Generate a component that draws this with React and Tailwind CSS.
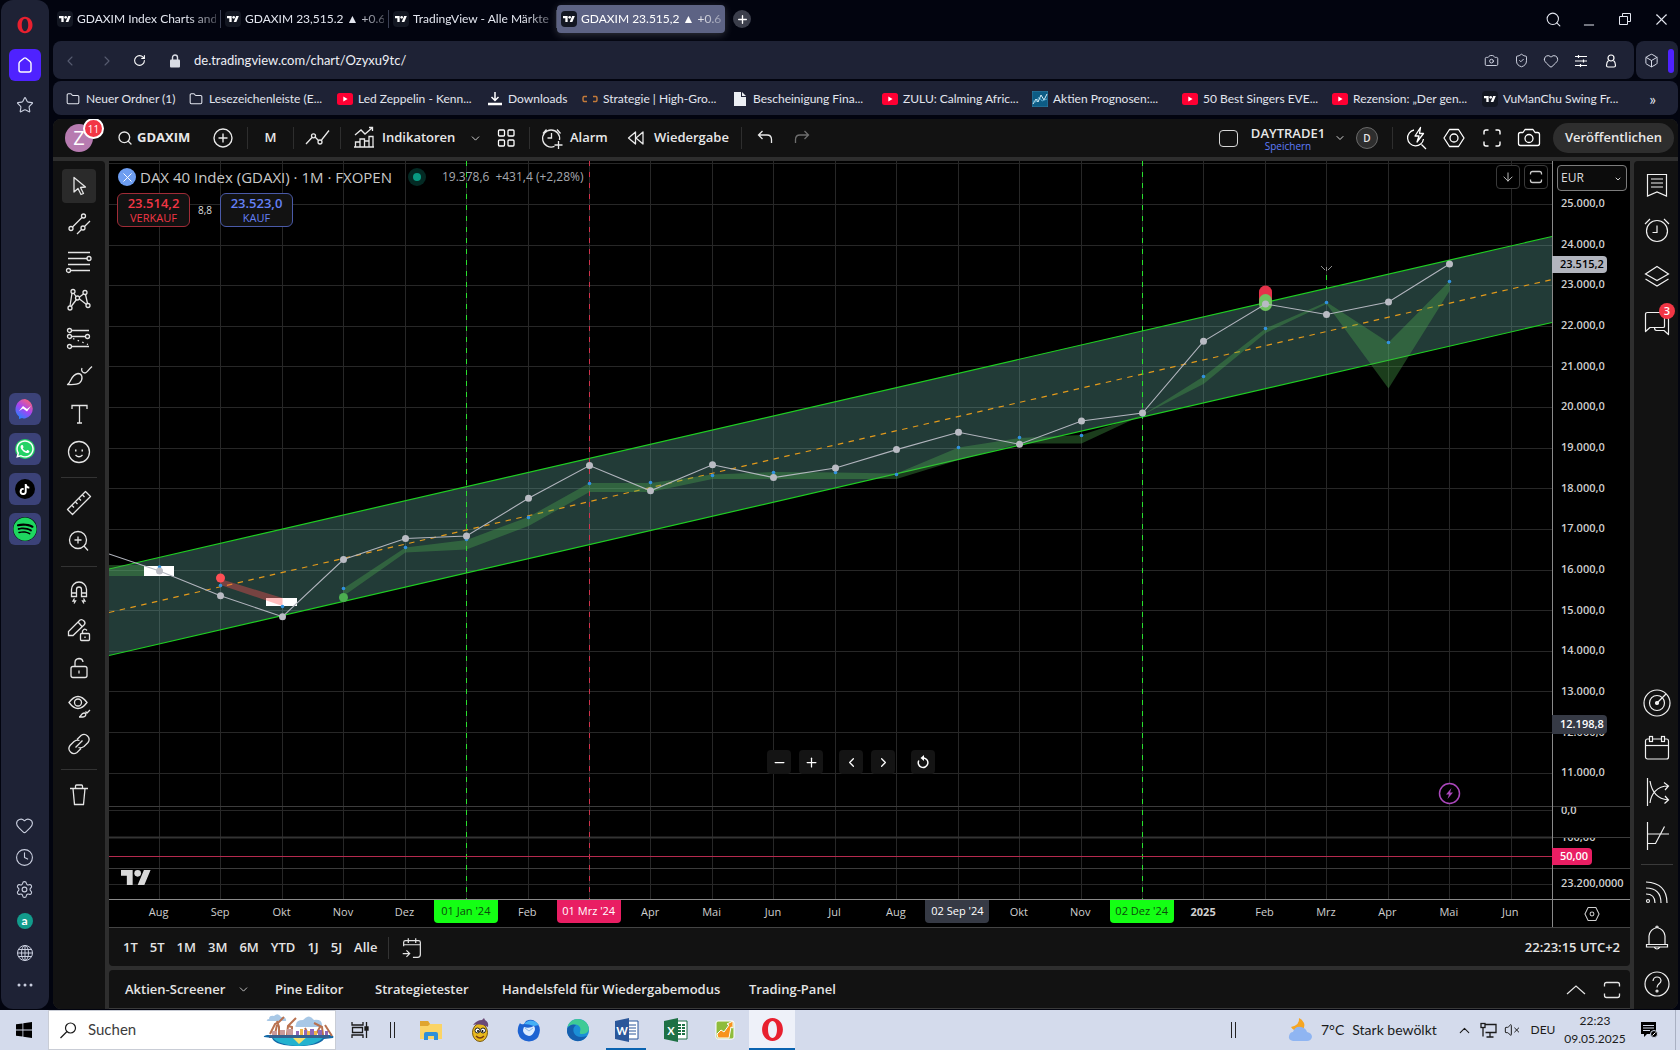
import React, { useState } from 'react';
import {
  Search, Minus, Plus, X, Copy, ChevronLeft, ChevronRight, ChevronDown, ChevronUp, RotateCw, Camera,
  ShieldCheck, Heart, Box, Folder, Undo, Redo, Layers, Settings, Clock, Globe, Star, ArrowDown, VolumeX,
} from 'lucide-react';
import { FaWhatsapp, FaTiktok, FaSpotify } from 'react-icons/fa';

/* ---------- data ---------- */

const TABS = ['GDAXIM Index Charts and', 'GDAXIM 23,515.2 ▲ +0.61', 'TradingView - Alle Märkte'];

const BOOKMARKS = [
  { icon: 'folder', label: 'Neuer Ordner (1)', width: 'w-[123px]' },
  { icon: 'folder', label: 'Lesezeichenleiste (E...', width: 'w-[149px]' },
  { icon: 'yt', label: 'Led Zeppelin - Kenn...', width: 'w-[150px]' },
  { icon: 'download', label: 'Downloads', width: 'w-[95px]' },
  { icon: 'brackets', label: 'Strategie | High-Gro...', width: 'w-[150px]' },
  { icon: 'file', label: 'Bescheinigung Fina...', width: 'w-[150px]' },
  { icon: 'yt', label: 'ZULU: Calming Afric...', width: 'w-[150px]' },
  { icon: 'chart', label: 'Aktien Prognosen:...', width: 'w-[150px]' },
  { icon: 'yt', label: '50 Best Singers EVE...', width: 'w-[150px]' },
  { icon: 'yt', label: 'Rezension: „Der gen...', width: 'w-[150px]' },
  { icon: 'tv', label: 'VuManChu Swing Fr...', width: 'w-[150px]' },
];

const MONTHS = [
  { label: 'Aug', x: 159.5 }, { label: 'Sep', x: 220.5 }, { label: 'Okt', x: 282.5 }, { label: 'Nov', x: 343.5 },
  { label: 'Dez', x: 405.5 }, { label: "01 Jan '24", x: 466.5, mark: 'green' }, { label: 'Feb', x: 528.5 },
  { label: "01 Mrz '24", x: 589.5, mark: 'red' }, { label: 'Apr', x: 650.5 }, { label: 'Mai', x: 712.5 },
  { label: 'Jun', x: 773.5 }, { label: 'Jul', x: 835.5 }, { label: 'Aug', x: 896.5 },
  { label: "02 Sep '24", x: 958.5, mark: 'gray' }, { label: 'Okt', x: 1019.5 }, { label: 'Nov', x: 1081.5 },
  { label: "02 Dez '24", x: 1142.5, mark: 'green' }, { label: '2025', x: 1203.5, bold: true }, { label: 'Feb', x: 1265.5 },
  { label: 'Mrz', x: 1326.5 }, { label: 'Apr', x: 1388.5 }, { label: 'Mai', x: 1449.5 }, { label: 'Jun', x: 1511.5 },
];

const MARKS = {
  green: 'bg-[#14ff14] text-[#0c4a0c]',
  red: 'bg-[#e91e63] text-white',
  gray: 'bg-[#363a45] text-white',
};

const PRICES = [25, 24, 23, 22, 21, 20, 19, 18, 17, 16, 15, 14, 13, 12, 11];
const GRID_Y = [163.5, 204.5, 245.5, 285.5, 326.5, 366.5, 407.5, 448.5, 488.5, 529.5, 570.5, 610.5, 651.5, 691.5, 732.5, 773.5, 810.5, 884.5];
const CLOSES = [571, 595.7, 616.7, 559.5, 538.5, 536, 498.3, 465.5, 490.8, 464.8, 477.6, 468, 449.6, 432.3, 444.3, 421, 413, 341.3, 304, 314.5, 302, 264];
const DOTS = [567, 585.5, 606.5, 588.5, 547.5, 539.5, 517.5, 483.5, 482.5, 475.5, 472.5, 472.5, 474.5, 447.5, 437.5, 435.5, 415, 376.5, 328.5, 302.5, 342.5, 281.5];
const BAND_TOP = [588.5, 547.5, 540, 517, 483, 483, 474.5, 472, 472.5, 473.5, 447.5, 438, 435, 415, 376.5, 328.5, 302, 342.5, 281];
const BAND_LOW = [596, 552.5, 549.5, 526, 492, 492, 479, 479, 479, 479, 460, 443.5, 443.5, 415, 384, 333, 304, 388.5, 291];

const RANGES = ['1T', '5T', '1M', '3M', '6M', 'YTD', '1J', '5J', 'Alle'];

/* ---------- small drawings ---------- */

const Svg = ({ size = 28, box = 28, sw = 1.2, className = '', children }) => (
  <svg width={size} height={size} viewBox={`0 0 ${box} ${box}`} fill="none" stroke="currentColor" strokeWidth={sw} className={`shrink-0 ${className}`} aria-hidden="true">
    {children}
  </svg>
);

const TvMark = ({ className }) => (
  <svg viewBox="0 4 36 18" fill="currentColor" className={className} aria-hidden="true">
    <path d="M14 22H7V11H0V4h14v18zM28 22h-8l7.5-18h8L28 22z" />
    <circle cx="20" cy="8" r="4" />
  </svg>
);

const TvFavicon = () => (
  <span className="flex h-4 w-4 shrink-0 items-center justify-center rounded-sm bg-[#131722] text-white">
    <TvMark className="w-3" />
  </span>
);

const OperaLogo = ({ className }) => (
  <svg viewBox="0 0 24 24" className={className} aria-hidden="true">
    <path fill="#e8202f" fillRule="evenodd" d="M12 1c6 0 10 5 10 11s-4 11-10 11S2 18 2 12 6 1 12 1zm0 2.800c-2.700 0-4.300 3.700-4.300 8.200s1.600 8.200 4.300 8.200 4.300-3.700 4.300-8.200S14.700 3.800 12 3.800z" />
  </svg>
);

function BookmarkIcon({ kind }) {
  switch (kind) {
    case 'folder':
      return <Folder size={14} strokeWidth={1.8} />;
    case 'yt':
      return (
        <svg width="16" height="12" viewBox="0 0 16 12" aria-hidden="true">
          <rect width="16" height="12" rx="2.500" fill="#ff0033" />
          <path d="M6.300 3.500v5L10.600 6z" fill="#fff" />
        </svg>
      );
    case 'download':
      return (
        <svg width="14" height="14" viewBox="0 0 14 14" stroke="#fff" fill="none" aria-hidden="true">
          <path d="M7 0v8M3.500 5 7 8.500 10.500 5" strokeWidth="1.500" />
          <path d="M0 12h14" strokeWidth="2.500" />
        </svg>
      );
    case 'brackets':
      return (
        <svg width="16" height="8" viewBox="0 0 16 8" stroke="#c27a3a" fill="none" strokeWidth="1.500" aria-hidden="true">
          <path d="M5 1.500H2Q1 1.500 1 4t1 2.500h3M11 1.500h3q1 0 1 2.500t-1 2.500h-3" />
        </svg>
      );
    case 'file':
      return (
        <svg width="12" height="14" viewBox="0 0 12 14" fill="#eceff4" aria-hidden="true">
          <path d="M0 0h7v5h5v9H0z" /><path d="M8 0l4 4H8z" />
        </svg>
      );
    case 'chart':
      return (
        <svg width="16" height="16" viewBox="0 0 16 16" aria-hidden="true">
          <rect width="16" height="16" fill="#0d5c85" stroke="#4d92b4" strokeWidth=".6" />
          <path d="M1 13l3-5 2 3 3-7 3 5 3-6" stroke="#d7eef8" fill="none" />
          <path d="M1 10l3 1 3-5 3 4 5-2" stroke="#6db9dc" fill="none" strokeWidth=".8" />
        </svg>
      );
    default:
      return <TvFavicon />;
  }
}

const IconButton = ({ label, className = '', children }) => (
  <button type="button" aria-label={label} className={`flex shrink-0 items-center justify-center ${className}`}>
    {children}
  </button>
);

/* ---------- browser ---------- */

function BrowserSidebar() {
  const app = 'flex h-8 w-8 items-center justify-center rounded-md bg-[#3b4278]';
  return (
    <aside className="ml-px flex w-12 shrink-0 flex-col items-center rounded-xl bg-[#1e2235] pr-px pb-2 text-[#c9cede]">
      <OperaLogo className="mt-4 h-[18px] w-[18px]" />
      <IconButton label="Startseite" className="mt-[15px] h-8 w-8 rounded-md bg-[#4f22ff] text-white">
        <Svg size={20} box={20} sw={1.4}><path d="M4 8.500q0-1 1-2L9 3.200q1-.7 2 0l4 3.300q1 1 1 2V15q0 2-2 2H6q-2 0-2-2z" strokeLinejoin="round" /></Svg>
      </IconButton>
      <IconButton label="Favoriten" className="mt-2 h-8 w-8"><Star size={18} strokeWidth={1.5} /></IconButton>
      <div className="mt-[272px] flex flex-col gap-2">
        <a href="#messenger" aria-label="Messenger" className={app}>
          <svg width="20" height="20" viewBox="0 0 20 20" aria-hidden="true">
            <defs>
              <linearGradient id="msg" x1="0.200" y1="1" x2="0.800" y2="0">
                <stop offset="0" stopColor="#1f86ff" />
                <stop offset=".5" stopColor="#a444f2" />
                <stop offset="1" stopColor="#ff6570" />
              </linearGradient>
            </defs>
            <path d="M10 0a10 10 0 0 1 0 19.500q-1.500 0-3-.5l-3 1v-2.500A10 10 0 0 1 10 0z" fill="url(#msg)" />
            <path d="M4 12l4-5 4 3 4-3-4 5.500-4-3z" fill="#fff" />
          </svg>
        </a>
        <a href="#whatsapp" aria-label="WhatsApp" className={app}>
          <span className="flex h-5 w-5 items-center justify-center rounded-full bg-[#25d366] text-white"><FaWhatsapp size={20} /></span>
        </a>
        <a href="#tiktok" aria-label="TikTok" className={app}>
          <span className="flex h-5 w-5 items-center justify-center rounded-full bg-black text-white"><FaTiktok size={11} /></span>
        </a>
        <a href="#spotify" aria-label="Spotify" className={app}>
          <span className="rounded-full bg-black"><FaSpotify size={24} className="text-[#1ed760]" /></span>
        </a>
      </div>
      <div className="mt-auto flex flex-col items-center">
        <IconButton label="Pinnwände" className="h-8 w-8"><Heart size={19} strokeWidth={1.4} /></IconButton>
        <IconButton label="Verlauf" className="h-8 w-8"><Clock size={19} strokeWidth={1.4} /></IconButton>
        <IconButton label="Einstellungen" className="h-8 w-8"><Settings size={19} strokeWidth={1.4} /></IconButton>
        <IconButton label="Aria" className="h-8 w-8">
          <span className="flex h-4 w-4 items-center justify-center rounded-full bg-[#129c8c] text-xs leading-3 font-bold text-white">a</span>
        </IconButton>
        <IconButton label="Sprache" className="h-8 w-8">
          <Svg size={18} box={18} sw={1}><circle cx="9" cy="9" r="7.500" /><ellipse cx="9" cy="9" rx="3.500" ry="7.500" /><path d="M9 1.500v15M1.500 9h15M2.500 5.500h13M2.500 12.500h13" /></Svg>
        </IconButton>
        <IconButton label="Mehr" className="h-8 w-8">
          <svg width="16" height="4" fill="currentColor"><circle cx="2" cy="2" r="1.500" /><circle cx="8" cy="2" r="1.500" /><circle cx="14" cy="2" r="1.500" /></svg>
        </IconButton>
      </div>
    </aside>
  );
}

function TabStrip() {
  const fade = 'flex-1 overflow-hidden text-left whitespace-nowrap [mask-image:linear-gradient(to_right,#000_80%,#0005)]';
  return (
    <div className="flex h-[41px] items-start pt-[5px] text-xs text-[#e3e6ef]">
      <div role="tablist" className="flex">
        {TABS.map((t) => (
          <button key={t} type="button" role="tab" aria-selected="false" className="flex h-7 w-[168px] items-center gap-1 pl-1">
            <TvFavicon />
            <span className={fade}>{t}</span>
            <span className="h-[18px] w-px bg-[#3a3f52]" />
          </button>
        ))}
        <button type="button" role="tab" aria-selected="true" className="flex h-7 w-[168px] items-center gap-1 rounded-sm bg-[#5d6384] px-1 text-white shadow-[0_2px_8px_#ffffff30]">
          <TvFavicon />
          <span className={fade}>GDAXIM 23.515,2 ▲ +0.61</span>
        </button>
      </div>
      <IconButton label="Neuer Tab" className="mt-[5px] ml-2 h-[18px] w-[18px] rounded-full bg-[#3b3e4b] text-white"><Plus size={13} strokeWidth={2.5} /></IconButton>
      <div className="ml-auto flex pr-px">
        <IconButton label="Tabs suchen" className="h-7 w-9"><Search size={17} strokeWidth={1.5} /></IconButton>
        <IconButton label="Minimieren" className="h-7 w-9 pt-3"><Minus size={16} strokeWidth={1.5} /></IconButton>
        <IconButton label="Wiederherstellen" className="h-7 w-9">
          <Svg size={14} box={14} sw={1}><path d="M1.500 4.500h8v8h-8zM4.500 4.500v-3h8v8h-3" /></Svg>
        </IconButton>
        <IconButton label="Schließen" className="h-7 w-9"><X size={19} strokeWidth={1.4} /></IconButton>
      </div>
    </div>
  );
}

function AddressBar() {
  return (
    <div className="flex h-[38px] gap-[2px] pr-[2px] text-[#d5d9e6]">
      <div className="flex flex-1 items-center rounded-lg bg-[#1e2235] pt-px">
        <IconButton label="Zurück" className="h-9 w-[34px] text-[#575c70]"><ChevronLeft size={16} strokeWidth={1.6} /></IconButton>
        <IconButton label="Vorwärts" className="h-9 w-10 text-[#575c70]"><ChevronRight size={16} strokeWidth={1.6} /></IconButton>
        <IconButton label="Neu laden" className="h-9 w-6 text-white"><RotateCw size={13} strokeWidth={2} /></IconButton>
        <svg width="10" height="14" viewBox="0 0 10 14" className="ml-[19px]" aria-hidden="true">
          <path d="M2.500 6V3.500a2.500 2.500 0 0 1 5 0V6" fill="none" stroke="#d9dce4" strokeWidth="1.400" />
          <rect y="5.500" width="10" height="8" rx="1" fill="#d9dce4" />
        </svg>
        <input aria-label="Adresse" defaultValue="de.tradingview.com/chart/Ozyxu9tc/" className="ml-[14px] min-w-0 flex-1 bg-transparent text-[13px] text-[#eef0f6] outline-none" />
        <div className="flex pr-2">
          <IconButton label="Schnappschuss" className="h-9 w-[30px]"><Camera size={15} strokeWidth={1.5} /></IconButton>
          <IconButton label="Werbeblocker" className="h-9 w-[30px]"><ShieldCheck size={15} strokeWidth={1.5} /></IconButton>
          <IconButton label="Merken" className="h-9 w-[30px]"><Heart size={16} strokeWidth={1.5} /></IconButton>
          <IconButton label="Einfache Einrichtung" className="h-9 w-[30px] text-white">
            <Svg size={14} box={14}><path d="M1 2.500h12M1 7h12M1 11.500h12M4.500 1v3M9.500 5.500v3M6.500 10v3" /></Svg>
          </IconButton>
          <IconButton label="Profil" className="h-9 w-[30px] text-white">
            <Svg size={14} box={14}><circle cx="7" cy="4" r="3" /><path d="M4.500 6.500C2.500 8 2.500 9.500 2.500 11.500q0 1.500 1.500 1.500h6q1.500 0 1.500-1.500c0-2 0-3.500-2-5" /></Svg>
          </IconButton>
        </div>
      </div>
      <div className="flex w-[42px] items-center justify-end gap-[5px] rounded-lg bg-[#1e2235] pt-px pr-1">
        <IconButton label="Erweiterungen" className="h-9 w-6"><Box size={15} strokeWidth={1.6} /></IconButton>
        <span className="h-6 w-[6px] rounded-sm bg-[#4f22ff]" />
      </div>
    </div>
  );
}

function BookmarkBar() {
  return (
    <nav className="mt-[2px] mr-[2px] flex h-[34px] items-center rounded-lg bg-[#1e2235] pt-px pl-3 text-xs text-[#e3e6ef]">
      {BOOKMARKS.map((b) => (
        <a key={b.label} href="#lesezeichen" className={`flex shrink-0 items-center gap-[5px] whitespace-nowrap ${b.width}`}>
          <span className="flex w-4 shrink-0 justify-center"><BookmarkIcon kind={b.icon} /></span>
          {b.label}
        </a>
      ))}
      <button type="button" aria-label="Weitere Lesezeichen" className="ml-auto pr-[22px] text-base leading-4">»</button>
    </nav>
  );
}

/* ---------- chart application ---------- */

const Divider = () => <span className="h-[22px] w-px shrink-0 bg-[#2e2e2e]" />;

function TopToolbar() {
  return (
    <header className="flex h-[38px] shrink-0 items-center bg-[#121212] text-[13px] font-semibold text-[#e8e8e8]">
      <button type="button" aria-label="Konto, 11 Mitteilungen" className="relative ml-3 flex h-7 w-7 shrink-0 items-center justify-center rounded-full bg-[#b77bb0] text-xl font-medium text-white">
        Z
        <span className="absolute -top-[6px] left-[18px] flex h-[21px] w-[21px] items-center justify-center rounded-full border-2 border-white bg-[#f23645] text-[10px]">11</span>
      </button>
      <button type="button" className="ml-6 flex h-full w-[84px] items-center gap-1 font-bold"><Search size={16} strokeWidth={2} className="shrink-0" />GDAXIM</button>
      <IconButton label="Symbol vergleichen" className="mr-[2px] h-full w-[44px]">
        <Svg sw={1.4}><circle cx="14" cy="14" r="9" /><path d="M14 9.500v9M9.500 14h9" /></Svg>
      </IconButton>
      <Divider />
      <button type="button" className="h-full w-[45px]">M</button>
      <Divider />
      <IconButton label="Diagrammtyp" className="h-full w-[46px]">
        <Svg sw={1.3}><path d="M3 20 9 13.500M12 13l3.500 3.500M18.500 16l7.500-9.500" /><circle cx="10.500" cy="11.800" r="2" /><circle cx="17" cy="18" r="2" /></Svg>
      </IconButton>
      <Divider />
      <button type="button" className="flex h-full w-[122px] items-center gap-1 pl-[9px]">
        <Svg sw={1.3}><path d="M5 11l6-5 4 4 7-6M19 3.500h3.500V7M5.500 23v-5H10v5zM10 23v-8h4.500v8zM14.500 23v-6H19v6zM19 23V12.500h4V23zM4 23h20" /></Svg>
        Indikatoren
      </button>
      <IconButton label="Favorisierte Indikatoren" className="h-full w-6"><ChevronDown size={13} strokeWidth={1.6} /></IconButton>
      <IconButton label="Vorlagen" className="mr-1 h-full w-[38px] text-white">
        <Svg sw={1.3}><rect x="6.500" y="6" width="6" height="6" rx="1" /><rect x="16" y="6" width="6" height="6" rx="1" /><rect x="6.500" y="16" width="6" height="6" rx="1" /><rect x="16" y="16" width="6" height="6" rx="1" /></Svg>
      </IconButton>
      <Divider />
      <button type="button" className="flex h-full w-[92px] items-center gap-1 pl-2">
        <Svg sw={1.3}><path d="M21.500 16a8.500 8.500 0 1 0-5 6.300M13.500 9v5H9.500M5 9.500 8.500 5.500M19 5.500 22.500 9.500M20.500 17v8M16.500 21h8" /></Svg>
        Alarm
      </button>
      <button type="button" className="flex h-full w-[119px] items-center gap-1">
        <Svg sw={1.3}><path d="M13.500 8v12L6.500 14zM21 8v12L14 14z" strokeLinejoin="round" /></Svg>
        Wiedergabe
      </button>
      <Divider />
      <IconButton label="Rückgängig" className="h-full w-[46px]">
        <Svg sw={1.3}><path d="M11.500 7 7.500 11l4 4M7.500 11H16q4.500 0 4.500 4.500V19" /></Svg>
      </IconButton>
      <IconButton label="Wiederholen" className="h-full w-7 text-[#6e6e6e]">
        <Svg sw={1.3}><path d="M16.500 7l4 4-4 4M20.500 11H12q-4.500 0-4.500 4.500V19" /></Svg>
      </IconButton>

      <div className="ml-auto flex h-full items-center">
        <IconButton label="Layout" className="h-full w-10"><span className="h-[17px] w-[19px] rounded-sm border border-[#d8d8d8]" /></IconButton>
        <button type="button" className="flex w-[80px] flex-col items-center leading-4">
          DAYTRADE1
          <span className="text-[10px] leading-[10px] font-medium text-[#5f7dfb]">Speichern</span>
        </button>
        <IconButton label="Layout verwalten" className="h-full w-6"><ChevronDown size={12} strokeWidth={1.8} /></IconButton>
        <IconButton label="D" className="mr-[14px] ml-1 h-[22px] w-[22px] rounded-full border border-[#6a6a6a] bg-[#2e2e2e] text-[10px]">D</IconButton>
        <Divider />
        <IconButton label="Schnellsuche" className="ml-1 h-full w-[38px] text-white">
          <Svg sw={1.3}><path d="M12 6a8 8 0 1 0 9.500 9M19.500 20.500l4.500 4.500M18.500 3.500 13 12h4l-2 6 6.500-8.500h-4z" strokeLinejoin="round" /></Svg>
        </IconButton>
        <IconButton label="Einstellungen" className="h-full w-[38px] text-white">
          <Svg sw={1.3}><path d="M9.500 5.500h9l5.500 8.500-5.500 8.500h-9L4 14z" strokeLinejoin="round" /><circle cx="14" cy="14" r="4" /></Svg>
        </IconButton>
        <IconButton label="Vollbild" className="h-full w-[37px] text-white">
          <Svg sw={1.4}><path d="M6 10.500V8q0-2 2-2h2.500M17.500 6H20q2 0 2 2v2.500M22 17.500V20q0 2-2 2h-2.500M10.500 22H8q-2 0-2-2v-2.500" /></Svg>
        </IconButton>
        <IconButton label="Schnappschuss" className="h-full w-[38px] text-white">
          <Svg sw={1.3}><path d="M10 5.500h8l2 3h2.500q2 0 2 2v9q0 2-2 2h-17q-2 0-2-2v-9q0-2 2-2H8z" strokeLinejoin="round" /><circle cx="14" cy="14.500" r="4" /></Svg>
        </IconButton>
        <button type="button" className="mr-1 ml-[5px] h-[30px] w-[121px] rounded-full bg-[#2e2e2e]">Veröffentlichen</button>
      </div>
    </header>
  );
}

const TOOLS = [
  { name: 'Cursor', active: true, art: <path d="M9 5.500v14.500l4-3.500 3 6 2.500-1-3-6 5-.5z" strokeLinejoin="round" /> },
  { name: 'Trendlinien', art: <><path d="M7.500 17 17 7.500M12 24l4.500-4.500M19.500 16.500 25 11" /><circle cx="6" cy="18.500" r="2" /><circle cx="18.500" cy="6" r="2" /><circle cx="18" cy="18" r="2" /></> },
  { name: 'Fibonacci', art: <><path d="M3 4.500h22M3 10.500h19.500M3 16.500h22M5.500 22.500H25" /><circle cx="24" cy="10.500" r="2" /><circle cx="3.500" cy="22.500" r="2" /></> },
  { name: 'Muster', art: <><path d="M7 7 5 20M9 7.500l2 3M6.500 20l5-6.500M14.500 11l4-3M14.500 13l7 5.500M20.500 8.500l2 9" /><circle cx="8" cy="5.500" r="2" /><circle cx="20" cy="6.500" r="2" /><circle cx="5" cy="22" r="2" /><circle cx="23" cy="19.500" r="2" /><circle cx="12.500" cy="12" r="2" /></> },
  { name: 'Prognose', art: <><path d="M6.500 6.500H24M6.500 12.500h14M6.500 22.500H24" /><path d="M8 14.500l15 6" strokeDasharray="1.500 3.500" /><circle cx="4.500" cy="6.500" r="2" /><circle cx="4.500" cy="12.500" r="2" /><circle cx="22.500" cy="12.500" r="2" /><circle cx="4.500" cy="22.500" r="2" /></> },
  { name: 'Pinsel', art: <path d="M2.500 22.500c3.500-1 3-10 10.500-11 4.500 0 5.500 6 1.500 9.500C12 23 8 22.500 2.500 22.500zM17 6c-1 2 0 5 3 5 2 0 2-2 7-6.500" strokeLinejoin="round" /> },
  { name: 'Text', art: <path d="M7 9V5.500h15V9M14.500 5.500v17.500M12 23h5" /> },
  { name: 'Emojis', art: <><circle cx="14" cy="14" r="10.500" /><path d="M10.500 17q3.500 3.500 7 0" /><path d="M10 12.500h1.500M16.500 12.500H18" strokeWidth="2" /></>, end: true },
  { name: 'Messen', art: <><path d="M2.500 20.500 20.500 2.500l5 5L7.500 25.500z" strokeLinejoin="round" /><path d="M7 16.500l2 2M10.500 13l2 2M14 9.500l2 2M17.500 6l2 2" /></> },
  { name: 'Zoom', art: <><circle cx="13" cy="13" r="8.500" /><path d="M13 9.500v7M9.500 13h7M19 19l4 4.500" /></>, end: true },
  { name: 'Magnet', art: <><path d="M6.500 18.500v-7a7.500 7.500 0 0 1 15 0v7h-5v-7a2.500 2.500 0 0 0-5 0v7zM6.500 15h5M16.500 15h5" /><path d="M9.500 20.500 8 23h2.500L9 25.500M18.500 20.500 20 23h-2.500l1.500 2.500" /></> },
  { name: 'Zeichenmodus', art: <><path d="M3.500 19.500v-4L15 4q2-1 4 1t0 4L8 19.500zM13 6l4 4.500" /><rect x="15.500" y="17.500" width="9" height="7" rx="1" /><path d="M17.500 17.500V15q2-3.500 4.500-.5M20 20.500v1.500" /></> },
  { name: 'Sperren', art: <><rect x="6" y="12.500" width="16" height="11" rx="2" /><path d="M10 12.500V8.500q0-3.500 4-4 3.500 0 4 3.500M14 16.500v3" /></> },
  { name: 'Ausblenden', art: <><path d="M4 10.500q9-12 18 0-9 12-18 0z" /><circle cx="13" cy="10.500" r="3.500" /><path d="M14 25c2 0 2-4 5-4s2 4-1 4zM20.500 19.500l1.500 1.500 3-3" /></> },
  { name: 'Verknüpfen', art: <path d="M12 9.500l4-4q3.500-2.500 6.500.5t.5 6.500l-4 4q-3 2-5.500 1M16 18.500l-4 4q-3.500 2.500-6.500-.5t-.500-6.500l4-4q3-2 5.500-1M10.500 17.500l7-7" />, end: true },
  { name: 'Löschen', art: <path d="M5 7.500h18M8 7.500l1.500 16h9L20 7.500M10.500 7.500V5q0-1 1-1h5q1 0 1 1v2.500" /> },
];

function DrawingToolbar() {
  return (
    <div className="flex w-[52px] shrink-0 flex-col items-center rounded-tr bg-[#121212] pt-[6px] text-[#e4e4e4]">
      {TOOLS.map((t) => (
        <React.Fragment key={t.name}>
          <IconButton label={t.name} className="h-[38px] w-full">
            <span className={t.active ? 'flex h-[34px] w-[34px] items-center justify-center rounded bg-[#2a2a2a]' : ''}>
              <Svg size={28} sw={1.3}>{t.art}</Svg>
            </span>
          </IconButton>
          {t.end && <span className="my-[6px] h-px w-9 shrink-0 bg-[#333]" />}
        </React.Fragment>
      ))}
    </div>
  );
}

function Chart() {
  const priceLine = ['109,554'].concat(CLOSES.map((y, i) => `${MONTHS[i].x},${y}`)).join(' ');
  const band = BAND_TOP.map((y, i) => `${MONTHS[i + 3].x},${y}`)
    .concat(BAND_LOW.map((y, i) => `${MONTHS[i + 3].x},${y}`).reverse())
    .join(' ');
  return (
    <svg viewBox="109 161 1443 738" preserveAspectRatio="none" className="absolute inset-0 h-full w-full" role="img" aria-label="DAX 40 Index, Monatschart">
      <g stroke="#272727">
        {MONTHS.map((m) => <path key={m.x} d={`M${m.x} 161V899`} />)}
        {GRID_Y.map((y) => <path key={y} d={`M109 ${y}H1552`} />)}
        <path d="M109 806.5H1552M109 868.5H1552" stroke="#3c3c3c" />
        <path d="M109 837.5H1552" stroke="#333" strokeWidth="2" />
      </g>
      <path d="M109 569 1552 236.500V322.500L109 655.500z" fill="#6bb8ab" fillOpacity=".32" />
      <path d="M109 569 1552 236.500M109 655.500 1552 322.500" stroke="#1fce22" strokeWidth="1.200" />
      <path d="M109 612.500 1552 279.500" stroke="#e39a1b" strokeWidth="1.200" strokeDasharray="5.500 5.500" />
      <g strokeDasharray="5 6">
        <path d="M466.500 161V899M1142.500 161V899M1326.500 275V289" stroke="#28e32e" />
        <path d="M589.500 161V899" stroke="#d0324b" />
      </g>
      <path d="M109 856.500H1552" stroke="#b52a4e" />

      <path d="M109 565H144V576H109z" fill="#4caf50" fillOpacity=".35" />
      <polygon points={band} fill="#4caf50" fillOpacity=".35" />
      <path d="M144 566h30v10h-30zM266 598h31v8h-31z" fill="#fff" />
      <path d="M220.500 579 282.500 598V606L220.500 585z" fill="#ff5252" fillOpacity=".38" />

      <path d="M1265.500 292V300" stroke="#e5324a" strokeWidth="13" strokeLinecap="round" />
      <path d="M1265.500 300.500V304.500" stroke="#6fc25f" strokeWidth="13" strokeLinecap="round" />
      <path d="M1321 266l4 4M1332 266l-4 4M1326.500 267V271" stroke="#8c8c8c" />
      <polyline points={priceLine} fill="none" stroke="#b2b5be" strokeWidth="1.100" />
      {DOTS.map((y, i) => <circle key={i} cx={MONTHS[i].x} cy={y} r="1.800" fill="#3192e0" />)}
      {CLOSES.map((y, i) => <circle key={i} cx={MONTHS[i].x} cy={y} r="3.500" fill="#b9bbc3" />)}
      <circle cx="220.500" cy="578" r="4.500" fill="#ff4f55" />
      <circle cx="343.500" cy="597.500" r="4.500" fill="#4caf50" />

      <circle cx="1449.500" cy="793.500" r="10" fill="#000" stroke="#ab47bc" strokeWidth="1.500" />
      <path d="M1451.500 788l-5.500 6.500h3l-1.500 4.500 5.500-6.500h-3z" fill="#ab47bc" />
    </svg>
  );
}

function ChartPane() {
  const nav = 'h-6 w-6 rounded-sm bg-[#141414]';
  return (
    <section className="relative min-w-0 flex-1 bg-black">
      <Chart />
      <div className="relative flex items-center gap-1 pt-1 pl-[9px] text-[#c9c9c9]">
        <span className="flex h-[18px] w-[18px] items-center justify-center rounded-full bg-[#6d9df0] text-white"><X size={15} strokeWidth={1.500} /></span>
        <h1 className="text-[15px] leading-6 font-medium">DAX 40 Index (GDAXI) · 1M · FXOPEN</h1>
        <span className="ml-3 flex h-[18px] w-[18px] items-center justify-center rounded-full bg-[#042a24]"><span className="h-2 w-2 rounded-full bg-[#089981]" /></span>
        <div className="ml-3 flex gap-[6px] text-xs font-medium text-[#a6a8ae]">
          <span>19.378,6</span>
          <span>+431,4 (+2,28%)</span>
        </div>
        <div className="ml-auto flex gap-1 pr-1">
          <IconButton label="Nach unten" className="h-6 w-6 rounded border border-[#3a3a3a] bg-black"><ArrowDown size={14} strokeWidth={1.600} /></IconButton>
          <IconButton label="Maximieren" className="h-6 w-6 rounded border border-[#3a3a3a] bg-black">
            <Svg size={14} box={14} sw={1.300}><path d="M1.500 4.500V3.500q0-2 2-2h7q2 0 2 2v1M1.500 9.500v1q0 2 2 2h7q2 0 2-2v-1" /></Svg>
          </IconButton>
        </div>
      </div>
      <div className="relative mt-1 flex items-center pl-2 leading-[14px]">
        <button type="button" className="flex h-[34px] w-[73px] flex-col items-center justify-center rounded-md border border-[#a02c37] bg-[#121212] text-[11px] text-[#f23645]">
          <b className="text-[13px] leading-[15px] font-semibold">23.514,2</b>VERKAUF
        </button>
        <span className="w-[30px] text-center text-[10px] font-medium text-[#dcdcdc]">8,8</span>
        <button type="button" className="flex h-[34px] w-[73px] flex-col items-center justify-center rounded-md border border-[#4a5aa8] bg-[#121212] text-[11px] text-[#6580f5]">
          <b className="text-[13px] leading-[15px] font-semibold">23.523,0</b>KAUF
        </button>
      </div>
      <div className="absolute bottom-[125px] left-[45.6%] flex gap-2 text-white">
        <IconButton label="Verkleinern" className={nav}><Minus size={15} /></IconButton>
        <IconButton label="Vergrößern" className={nav}><Plus size={15} /></IconButton>
        <IconButton label="Nach links" className={`ml-2 ${nav}`}><ChevronLeft size={15} /></IconButton>
        <IconButton label="Nach rechts" className={nav}><ChevronRight size={15} /></IconButton>
        <IconButton label="Zurücksetzen" className={`ml-2 ${nav}`}>
          <Svg size={14} box={14} sw={1.500}><path d="M2.800 5.500A4.800 4.800 0 1 0 8 3H6.500" /><path d="M8 0v6L4.500 3z" fill="currentColor" stroke="none" /></Svg>
        </IconButton>
      </div>
      <TvMark className="absolute bottom-[14px] left-3 w-[30px] text-[#d8d8d8]" />
    </section>
  );
}

function PriceAxis() {
  const [currency, setCurrency] = useState('EUR');
  return (
    <div className="relative flex w-[78px] shrink-0 flex-col border-l border-[#8a8a8a] bg-black text-[11px] font-semibold text-[#cfcfcf]">
      <div className="grid min-h-0 flex-1 auto-rows-fr items-center pt-[22px] pb-[13px] pl-2">
        {PRICES.map((p) => <span key={p}>{p}.000,0</span>)}
      </div>
      <div className="h-[31px] overflow-hidden border-t border-[#3c3c3c] pl-2 leading-[6px]">0,0</div>
      <div className="h-[31px] overflow-hidden border-t border-[#3c3c3c] pl-2">
        <span className="-mt-2 block leading-[14px]">100,00</span>
      </div>
      <div className="flex h-[31px] items-center border-t border-[#3c3c3c] pb-[2px] pl-2">23.200,0000</div>
      <select aria-label="Währung" value={currency} onChange={(e) => setCurrency(e.target.value)} className="absolute top-1 left-1 h-[26px] w-[70px] appearance-none rounded border border-[#7c7c7c] bg-[#0c0c0c] pl-[3px] text-xs font-medium text-[#dcdcdc]">
        <option>EUR</option>
        <option>USD</option>
      </select>
      <ChevronDown size={8} strokeWidth={3} className="pointer-events-none absolute top-[14px] right-2" />
      <span className="absolute top-[95px] -left-px flex h-[17px] w-[55px] items-center rounded-r-sm bg-[#b2b5be] pl-2 text-black">23.515,2</span>
      <span className="absolute top-[554px] -left-px flex h-[19px] w-[55px] items-center rounded-r-sm bg-[#363a45] pl-2 text-white">12.198,8</span>
      <span className="absolute bottom-[34px] -left-px flex h-[17px] w-10 items-center rounded-r-sm bg-[#e91e63] pl-2 text-white">50,00</span>
    </div>
  );
}

function TimeAxis() {
  return (
    <div className="flex h-[29px] shrink-0 border-t border-b border-t-[#8a8a8a] border-b-[#444] bg-black text-[11px] text-[#cfcfcf]">
      <div className="grid flex-1 grid-cols-[repeat(23,minmax(0,1fr))] pr-[11px] pl-[19px] font-medium">
        {MONTHS.map((m) => (
          <span key={m.x} className="flex justify-center">
            {m.mark
              ? <span className={`flex h-[23px] w-16 shrink-0 items-center justify-center rounded-b-sm whitespace-nowrap ${MARKS[m.mark]}`}>{m.label}</span>
              : <span className={m.bold ? 'leading-6 font-bold' : 'leading-6'}>{m.label}</span>}
          </span>
        ))}
      </div>
      <IconButton label="Zeitachse einstellen" className="w-[78px] border-l border-[#8a8a8a]">
        <Svg size={18} sw={1.600}><path d="M8 4h12l5 10-5 10H8L3 14z" strokeLinejoin="round" /><circle cx="14" cy="14" r="3" /></Svg>
      </IconButton>
    </div>
  );
}

function RangeBar() {
  return (
    <div className="flex h-[38px] shrink-0 items-center rounded-b bg-[#121212] pt-px pr-[10px] pl-[14px] text-[13px] font-semibold text-[#e4e4e4]">
      <div className="flex gap-3">
        {RANGES.map((r) => <button key={r} type="button">{r}</button>)}
      </div>
      <span className="mr-[9px] ml-[11px] h-[22px] w-px bg-[#333]" />
      <IconButton label="Gehe zu Datum" className="h-8 w-7">
        <Svg size={26} sw={1.300}><path d="M5 12V8q0-2 2-2h14q2 0 2 2v13q0 3-3 3h-5M5 10.500h18M10 3.500v5M18 3.500v5M4 20h7M8 16.500 11.500 20 8 23.500" /></Svg>
      </IconButton>
      <button type="button" className="ml-auto">22:23:15 UTC+2</button>
    </div>
  );
}

function BottomPanel() {
  return (
    <div className="flex h-[39px] shrink-0 items-center rounded-t border-b border-[#3a3a3a] bg-[#121212] pt-px pl-4 text-[13px] font-semibold text-[#e4e4e4]">
      <button type="button" className="flex w-[150px] items-center gap-3">Aktien-Screener<ChevronDown size={13} strokeWidth={1.500} /></button>
      <button type="button" className="w-[100px] text-left">Pine Editor</button>
      <button type="button" className="w-[127px] text-left">Strategietester</button>
      <button type="button" className="w-[247px] text-left whitespace-nowrap">Handelsfeld für Wiedergabemodus</button>
      <button type="button">Trading-Panel</button>
      <div className="ml-auto flex">
        <IconButton label="Panel öffnen" className="h-8 w-9">
          <Svg size={20} box={20}><path d="M1 14 10 6l9 8" /></Svg>
        </IconButton>
        <IconButton label="Panel maximieren" className="h-8 w-9">
          <Svg size={20} box={20} sw={1.300}><path d="M2.500 6.500v-2q0-2 2-2h11q2 0 2 2v2M2.500 13.500v2q0 2 2 2h11q2 0 2-2v-2" /></Svg>
        </IconButton>
      </div>
    </div>
  );
}

function WidgetBar() {
  const item = 'h-[46px] w-full';
  return (
    <div className="flex w-11 shrink-0 flex-col items-center rounded-tl bg-[#121212] pt-px pb-[2px] pl-[2px] text-[#f0f0f0]">
      <IconButton label="Beobachtungsliste" className={item}>
        <Svg><path d="M4.500 3.500h19V25l-9.500-4-9.500 4zM8 8h12M8 12h12M8 16h12" /></Svg>
      </IconButton>
      <IconButton label="Alarme" className="h-11 w-full">
        <Svg><circle cx="14" cy="15" r="10.500" /><path d="M14 9.500v7H9.500M2 8l5-5M26 8l-5-5" /></Svg>
      </IconButton>
      <IconButton label="Objektbaum" className="h-[48px] w-full">
        <Svg><path d="M14 4.500 25.500 12 14 18.500 2.500 12zM2.500 17 14 24l11.500-7" /></Svg>
      </IconButton>
      <button type="button" aria-label="Chats, 3 neu" className="relative flex h-[46px] w-full items-center justify-center">
        <Svg><path d="M2.500 22.500V5.500q0-2 2-2h15q2 0 2 2v12q0 1-1.500 1H7zM11.500 18.500q0 3 2 3H21l4.500 4V10.500q0-2-2-2" strokeLinejoin="round" /></Svg>
        <span className="absolute top-[3px] right-[3px] flex h-4 w-4 items-center justify-center rounded-full bg-[#f23645] text-[11px] font-semibold text-white">3</span>
      </button>
      <span className="flex-1" />
      <IconButton label="Screener" className={item}>
        <Svg><circle cx="14" cy="14" r="13" /><circle cx="14" cy="14" r="7.500" /><circle cx="14" cy="14" r="1.500" fill="currentColor" /><path d="M14 14l9-9" /></Svg>
      </IconButton>
      <IconButton label="Kalender" className="h-11 w-full">
        <Svg><rect x="2.500" y="5" width="23" height="20" rx="2" /><path d="M2.500 11.500h23" /><rect x="6.500" y="2.500" width="3" height="5" fill="#121212" /><rect x="18.500" y="2.500" width="3" height="5" fill="#121212" /></Svg>
      </IconButton>
      <IconButton label="Optionen" className="h-11 w-full">
        <Svg><path d="M4.500 0v28M7 3c2 13 9 18 18 19M7 25C8 16 14 8 25 8M21 4.500 25.500 8 22 12M22 18l3.500 4-4 3.500" /></Svg>
      </IconButton>
      <IconButton label="Strategien" className="h-11 w-full">
        <Svg><path d="M4.500 0v28M4.500 12H26M4.500 21.500h8l9-17" /></Svg>
      </IconButton>
      <span className="mt-[6px] mb-1 h-px w-8 bg-[#3a3a3a]" />
      <IconButton label="Feed" className={item}>
        <Svg><circle cx="5" cy="23" r="1.500" /><path d="M3 16q9 0 9 9M3 10q15 0 15 15M3 4q21 1 21 21" /></Svg>
      </IconButton>
      <IconButton label="Benachrichtigungen" className={item}>
        <Svg><path d="M6 20.500V12q1-7 8-8.500 7 1.500 8 8.500v8.500M3.500 20.500h21v2.500h-21zM11 23q3 4 6 0M12.500 3.500q1.500-3 3 0" /></Svg>
      </IconButton>
      <IconButton label="Hilfe" className={item}>
        <Svg><circle cx="14" cy="14" r="12" /><path d="M10 11q.5-4 4-4t4 3.500c0 3.500-4 3-4 7" /><circle cx="14" cy="21" r="1" /></Svg>
      </IconButton>
    </div>
  );
}

/* ---------- taskbar ---------- */

const TASK_APPS = [
  { name: 'Explorer', art: <><path d="M1 3h8l2 3h12v15H1z" fill="#fbd466" /><path d="M1 3h8l2 3-2 2H1z" fill="#e0a52e" /><path d="M5 22v-6q0-2 2-2h10q2 0 2 2v6h-4v-4H9v4z" fill="#2f8fd8" /></> },
  { name: 'Maskottchen', art: <><ellipse cx="12" cy="14.500" rx="7.500" ry="9" fill="#e9b91e" stroke="#7a5a12" /><path d="M5 7q4-5 9-5l2-2 1 2q4 2 3 7-7-4-15-2z" fill="#6a4876" /><circle cx="9.500" cy="12.500" r="2.500" fill="#fff" stroke="#222" /><circle cx="15" cy="12.500" r="2.500" fill="#fff" stroke="#222" /><circle cx="10" cy="13" r="1" /><circle cx="14.500" cy="13" r="1" /><path d="M8 18q4 4 8 0" stroke="#7a3d12" fill="none" strokeWidth="1.500" /></> },
  { name: 'Thunderbird', art: <><path d="M3 5Q0 10 1 15q2 8 11 8.500 9-.5 10.500-8.500Q24 8 19 4q-4-4-10-1l-2 3Q4 7 3 5z" fill="#1d63d2" /><path d="M7 6q5-6 12-2l3 3-5 1q-5-2-10-2z" fill="#45b0f5" /><path d="M7 9q5 2 10-1 2 3 0 6-2 4-5 4-5-1-6-5 0-2 1-4z" fill="#dcecff" /><path d="M8 10l4 3 4-3" stroke="#8fb8ea" fill="none" /></> },
  { name: 'Edge', art: <><circle cx="12" cy="12" r="11" fill="#1b8fd6" /><path d="M1.500 9Q4 1 12 1q10 1 11 10-1 5-7 5-3 0-2-2 2-6-4-7.500Q5 6 1.500 9z" fill="#3fcb96" /><path d="M1.500 10Q5 5 10 7q-4 3-2 8 3 6 13 3-4 6-11 5-8-2-9-9 0-2 .5-4z" fill="#155fae" /></> },
  { name: 'Word', open: true, letter: 'W', art: <><path d="M11 3h12v18H11z" fill="#fff" stroke="#2b579a" /><path d="M14 7h7M14 10h7M14 13h7M14 16h7" stroke="#2b579a" /><path d="M0 3 14 0v24L0 21z" fill="#2b579a" /></> },
  { name: 'Excel', letter: 'X', art: <><path d="M11 3h12v18H11z" fill="#fff" stroke="#1e7145" /><path d="M14 7h7M14 10h7M14 13h7M14 16h7" stroke="#1e7145" strokeWidth="2" strokeDasharray="3 1" /><path d="M0 3 14 0v24L0 21z" fill="#1e7145" /></> },
  { name: 'Börse', art: <><rect x="3" y="3" width="18" height="18" rx="2" fill="#8fbc3c" stroke="#fff" /><path d="M4 16l4-4 3 2 5-7-2-1 6-3v7l-2-1-2 11H5z" fill="#f7931e" stroke="#fff" /></> },
];

function Taskbar() {
  return (
    <footer className="flex h-10 shrink-0 items-center bg-[#d4dbec] text-sm text-[#1b1b1b]">
      <IconButton label="Start" className="h-full w-12">
        <svg width="16" height="16" viewBox="0 0 16 16" aria-hidden="true"><path d="M0 2.300 6.500 1.400V7.600H0zM7.300 1.300 16 0v7.600H7.300zM0 8.400h6.500v6.200L0 13.700zM7.300 8.400H16V16l-8.700-1.300z" /></svg>
      </IconButton>
      <label className="flex h-full w-[288px] shrink-0 items-center border border-[#c9cdd6] bg-white pl-[11px]">
        <Svg size={17} box={17}><circle cx="10.500" cy="6" r="5" /><path d="M7 9.500.5 16" /></Svg>
        <input aria-label="Suchen" placeholder="Suchen" className="ml-[11px] min-w-0 flex-1 text-[15px] outline-none placeholder:text-[#3c3c3c]" />
        <svg width="72" height="34" viewBox="0 0 72 34" aria-hidden="true">
          <path d="M4 22q-4 1-3 2l8 1q3 8 27 8 20 0 25-7l9-1q2-2-3-3z" fill="#1169a8" />
          <path d="M10 25h50q-6 7-24 8-20-1-26-8z" fill="#24b2cf" />
          <path d="M28 23h17l-9 8z" fill="#f5e06a" />
          <path d="M6 6q0-4 5-3 4-4 7 1 6 0 5 4H5q-3-1 1-2zM33 12q0-5 7-5 6-7 11 0 8-1 8 5 1 3-3 2H34q-3 0-1-2z" fill="#a8c8e6" />
          <path d="M7 21l5-10 4-2 5-5M12 21l2-9M14 8l2 6v8M24 22l1-9 8-8M25 13l4 1v8M42 15l4 8M60 22l-1-8-8-4M62 12l7 11M53 21l4-7" stroke="#b9714f" fill="none" strokeWidth="2" />
          <path d="M9 18h5v6H9zM17 17h5v6h-5zM24 16h6v7h-6z" fill="#c99a9a" />
          <path d="M33 18h3v5h-3zM41 17h3v6h-3zM47 16h4v7h-4zM55 17h4v6h-4zM62 18h3v5h-3z" fill="#8f68b8" />
          <path d="M37 16h3v7h-3zM44 18h3v5h-3zM51 18h3v5h-3z" fill="#f0b74a" />
          <path d="M6 22h60v3H6z" fill="#35618f" />
        </svg>
      </label>
      <IconButton label="Taskansicht" className="h-full w-12">
        <Svg size={18} box={18} sw={1.300}><path d="M1 1v3h11V1M1 17v-3h11v3M1.500 6.500h10v5h-10zM15.500 1v16" /><path d="M14 6h3v3h-3z" fill="currentColor" /></Svg>
      </IconButton>
      <span className="mx-[6px] h-4 w-[5px] border-x border-[#222]" />
      <div className="ml-[5px] flex h-full">
        {TASK_APPS.map((a) => (
          <button key={a.name} type="button" aria-label={a.name} className="relative flex h-full w-[49px] items-center justify-center">
            <svg width="24" height="24" viewBox="0 0 24 24" aria-hidden="true">{a.art}
              {a.letter && <text x="7" y="16.500" textAnchor="middle" fill="#fff" className="text-[11px] font-bold">{a.letter}</text>}
            </svg>
            {a.open && <span className="absolute bottom-0 left-1 h-[2px] w-10 bg-[#0a63b0]" />}
          </button>
        ))}
        <button type="button" aria-label="Opera" className="flex h-full w-[46px] items-center justify-center border-b-2 border-[#0a63b0] bg-[#eef1f9]">
          <OperaLogo className="h-[25px] w-[25px]" />
        </button>
      </div>
      <div className="ml-auto flex h-full items-center">
        <span className="mr-[51px] h-4 w-[5px] border-x border-[#222]" />
        <button type="button" className="flex w-[165px] items-center gap-2 whitespace-nowrap">
          <svg width="26" height="26" viewBox="0 0 26 26" aria-hidden="true">
            <path d="M12 1q1 7-8 9 3 5 9 4 6-3 4-8-2-4-5-5z" fill="#f6a623" />
            <path d="M6 24q-5-1-4-5 1-4 4-4 2-6 8-5 5 1 6 5 5 1 5 5-1 4-5 4z" fill="#8fb5f2" />
          </svg>
          <span>7°C</span>
          <span>Stark bewölkt</span>
        </button>
        <IconButton label="Ausgeblendete Symbole" className="h-full w-6"><ChevronUp size={17} strokeWidth={1.500} /></IconButton>
        <IconButton label="Netzwerk" className="h-full w-6">
          <Svg size={17} box={17} sw={1.300}><path d="M5 2.500h11v8H5.500M10 10.500V15M6.500 15h7" /><rect x="1" y="1.500" width="4" height="4" fill="#d4dbec" /><path d="M3 6v8.500" /></Svg>
        </IconButton>
        <IconButton label="Ton aus" className="h-full w-6"><VolumeX size={16} strokeWidth={1.500} /></IconButton>
        <button type="button" className="h-full w-[38px] text-xs">DEU</button>
        <time className="w-[66px] text-center text-xs leading-[18px]">22:23<br />09.05.2025</time>
        <IconButton label="Info-Center" className="h-full w-[42px]">
          <svg width="17" height="16" viewBox="0 0 17 16" aria-hidden="true">
            <path d="M0 0h15v12H6l-3 3v-3H0z" /><path d="M2 3.500h11M2 6h11M2 8.500h7" stroke="#d4dbec" strokeWidth="1" />
            <circle cx="13" cy="12" r="3.500" stroke="#d4dbec" /><path d="M11.500 13.500l3-3" stroke="#fff" />
          </svg>
        </IconButton>
        <span className="mr-1 ml-[5px] h-full w-px bg-[#a9b0c2]" />
      </div>
    </footer>
  );
}

export default function App() {
  return (
    <div className="flex h-screen flex-col overflow-hidden bg-[#02040f] font-[Lato,sans-serif]">
      <div className="flex min-h-0 flex-1 pb-px">
        <BrowserSidebar />
        <div className="ml-1 flex min-w-0 flex-1 flex-col">
          <TabStrip />
          <AddressBar />
          <BookmarkBar />
          <main className="mt-1 mr-[2px] flex min-h-0 flex-1 flex-col overflow-hidden rounded-lg bg-[#2e2e2e] font-['Open_Sans',sans-serif]">
            <TopToolbar />
            <div className="mt-1 flex min-h-0 flex-1 gap-1">
              <DrawingToolbar />
              <div className="flex min-w-0 flex-1 flex-col">
                <div className="flex min-h-0 flex-1">
                  <ChartPane />
                  <PriceAxis />
                </div>
                <TimeAxis />
                <RangeBar />
                <div className="h-1 shrink-0" />
                <BottomPanel />
              </div>
              <WidgetBar />
            </div>
          </main>
        </div>
      </div>
      <Taskbar />
    </div>
  );
}
